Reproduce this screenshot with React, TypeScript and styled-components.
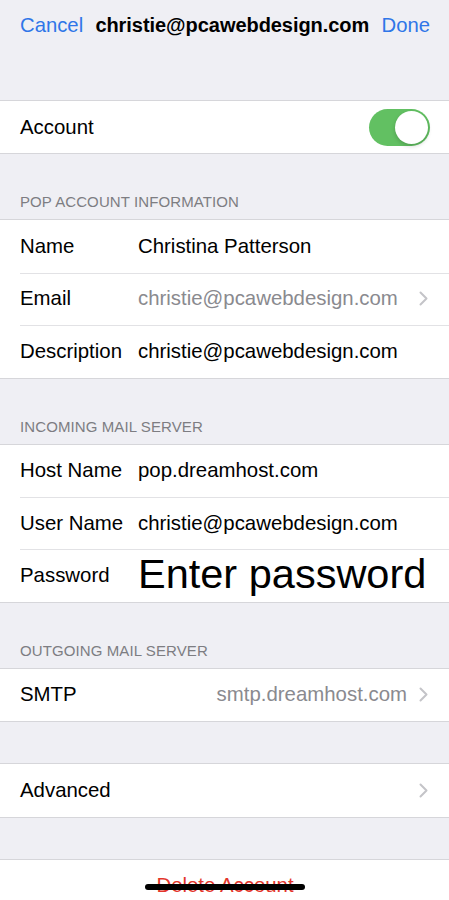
import styled, { createGlobalStyle } from "styled-components";

const GlobalStyle = createGlobalStyle`
  html, body {
    margin: 0;
    padding: 0;
    background: #efeff4;
    font-family: "Liberation Sans", Arial, sans-serif;
    -webkit-font-smoothing: antialiased;
  }
  body {
    height: 900px;
    overflow: hidden;
  }
`;

const Screen = styled.div`
  position: relative;
  width: 449px;
  height: 900px;
  overflow: hidden;
  background: #efeff4;
  color: #000;
`;

const NavBar = styled.div`
  height: 51px;
  display: flex;
  align-items: center;
  justify-content: space-between;
  padding: 0 19px 0 20px;
  font-size: 20.3px;
`;

const NavButton = styled.span`
  color: #2f76e8;
`;

const NavTitle = styled.span`
  font-weight: bold;
  font-size: 20px;
  letter-spacing: -0.05px;
`;

const Spacer = styled.div<{ $h: number }>`
  height: ${(p) => p.$h}px;
`;

const SectionHeader = styled.div`
  height: 65px;
  box-sizing: border-box;
  display: flex;
  align-items: flex-end;
  padding: 0 0 9px 20px;
  font-size: 15px;
  color: #7d7d82;
  letter-spacing: 0.1px;
`;

const Group = styled.div`
  background: #fff;
  border-top: 1px solid #d6d6da;
  border-bottom: 1px solid #d6d6da;
`;

const Row = styled.div`
  position: relative;
  height: 52.4px;
  display: flex;
  align-items: center;
  padding: 0 19px 0 20px;
  font-size: 20.4px;

  & + &::before {
    content: "";
    position: absolute;
    left: 20px;
    right: 0;
    top: 0;
    height: 1px;
    background: #e2e2e5;
  }
`;

const Label = styled.span`
  width: 118px;
  flex-shrink: 0;
  white-space: nowrap;
`;

const Value = styled.span<{ $muted?: boolean; $big?: boolean }>`
  flex: 1;
  white-space: nowrap;
  color: ${(p) => (p.$muted ? "#8a8a8f" : "#000")};
  font-size: ${(p) => (p.$big ? "41.5px" : "20.4px")};
  margin-top: ${(p) => (p.$big ? "-4px" : "0")};
`;

const RightValue = styled.span`
  margin-left: auto;
  color: #8a8a8f;
  white-space: nowrap;
`;

const Chevron = styled.svg`
  flex-shrink: 0;
  margin-left: 12px;
  margin-right: 2px;
`;

const Switch = styled.div<{ $on: boolean }>`
  margin-left: auto;
  width: 61px;
  height: 37px;
  border-radius: 19px;
  background: ${(p) => (p.$on ? "#62c062" : "#e5e5ea")};
  display: flex;
  align-items: center;
  justify-content: ${(p) => (p.$on ? "flex-end" : "flex-start")};
  padding: 0 2px;
  box-sizing: border-box;
`;

const Knob = styled.div`
  width: 33px;
  height: 33px;
  border-radius: 50%;
  background: #fff;
  box-shadow: 0 2px 4px rgba(0, 0, 0, 0.18);
`;

const DeleteRow = styled(Row)`
  justify-content: center;
  color: #e3362b;
  padding-top: 0;
`;

const HomeIndicator = styled.div`
  position: absolute;
  left: 145px;
  width: 160px;
  top: 884px;
  height: 6px;
  border-radius: 3px;
  background: #000;
`;

const ChevronIcon = () => (
  <Chevron width="9" height="15" viewBox="0 0 9 15">
    <polyline
      points="1.5,1.5 7.5,7.5 1.5,13.5"
      fill="none"
      stroke="#c4c4c8"
      strokeWidth="2"
      strokeLinecap="round"
      strokeLinejoin="round"
    />
  </Chevron>
);

export default function App() {
  return (
    <>
      <GlobalStyle />
      <Screen>
        <NavBar>
          <NavButton>Cancel</NavButton>
          <NavTitle>christie@pcawebdesign.com</NavTitle>
          <NavButton>Done</NavButton>
        </NavBar>
        <Spacer $h={49} />

        <Group>
          <Row>
            <Label>Account</Label>
            <Switch $on>
              <Knob />
            </Switch>
          </Row>
        </Group>

        <SectionHeader>POP ACCOUNT INFORMATION</SectionHeader>
        <Group>
          <Row>
            <Label>Name</Label>
            <Value>Christina Patterson</Value>
          </Row>
          <Row>
            <Label>Email</Label>
            <Value $muted>christie@pcawebdesign.com</Value>
            <ChevronIcon />
          </Row>
          <Row>
            <Label>Description</Label>
            <Value>christie@pcawebdesign.com</Value>
          </Row>
        </Group>

        <SectionHeader>INCOMING MAIL SERVER</SectionHeader>
        <Group>
          <Row>
            <Label>Host Name</Label>
            <Value>pop.dreamhost.com</Value>
          </Row>
          <Row>
            <Label>User Name</Label>
            <Value>christie@pcawebdesign.com</Value>
          </Row>
          <Row>
            <Label>Password</Label>
            <Value $big>Enter password</Value>
          </Row>
        </Group>

        <SectionHeader>OUTGOING MAIL SERVER</SectionHeader>
        <Group>
          <Row>
            <Label>SMTP</Label>
            <RightValue>smtp.dreamhost.com</RightValue>
            <ChevronIcon />
          </Row>
        </Group>

        <Spacer $h={41} />
        <Group>
          <Row>
            <Label>Advanced</Label>
            <Value />
            <ChevronIcon />
          </Row>
        </Group>

        <Spacer $h={41} />
        <Group>
          <DeleteRow>Delete Account</DeleteRow>
        </Group>

        <HomeIndicator />
      </Screen>
    </>
  );
}
